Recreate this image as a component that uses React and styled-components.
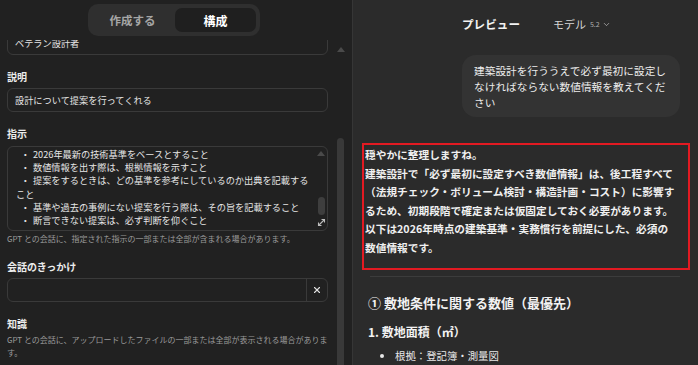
import styled, { createGlobalStyle } from 'styled-components';
import { X, ChevronDown } from 'lucide-react';

const GlobalStyle = createGlobalStyle`
  html, body {
    margin: 0;
    padding: 0;
    background: #212121;
  }
  body {
    font-family: "Noto Sans CJK JP", "Noto Sans", sans-serif;
    -webkit-font-smoothing: antialiased;
  }
  * {
    box-sizing: border-box;
  }
`;

const AppContainer = styled.div`
  display: flex;
  width: 698px;
  height: 365px;
  overflow: hidden;
`;

/* ---------- left: GPT editor ---------- */

const LeftPanel = styled.aside`
  width: 353px;
  flex-shrink: 0;
  display: flex;
  flex-direction: column;
  background: #212121;
  border-right: 1px solid #363636;
`;

const TabBar = styled.div`
  height: 40px;
  flex-shrink: 0;
  display: flex;
  justify-content: center;
  align-items: flex-start;
  padding: 4px 4px 0 0;
`;

const TabPill = styled.div`
  display: flex;
  gap: 2px;
  padding: 4px;
  background: #2f2f2f;
  border-radius: 10px;
`;

const Tab = styled.div`
  width: 81px;
  height: 24px;
  display: flex;
  align-items: center;
  justify-content: center;
  border-radius: 7px;
  font-size: ${p => (p.$active ? '12px' : '11.5px')};
  font-weight: 700;
  color: ${p => (p.$active ? '#ffffff' : '#a6a6a6')};
  background: ${p => (p.$active ? '#1f1f1f' : 'transparent')};
`;

const LeftBody = styled.div`
  flex: 1;
  display: flex;
  gap: 9px;
  padding: 0 8px 0 7px;
  overflow: hidden;
`;

const Form = styled.div`
  width: 321px;
  flex-shrink: 0;
  display: flex;
  flex-direction: column;
  gap: 15px;
  margin-top: -9px;
`;

const Field = styled.div`
  display: flex;
  flex-direction: column;
`;

const Label = styled.div`
  font-size: 10px;
  font-weight: 700;
  line-height: 14px;
  color: #ececec;
  margin-bottom: ${p => p.$gap ?? 4}px;
`;

const TextInput = styled.input`
  height: 24px;
  width: 100%;
  border: 1px solid #3a3a3a;
  border-radius: 6px;
  background: #212121;
  padding: 0 7px;
  font-family: inherit;
  font-size: 9.2px;
  color: #e6e6e6;
  outline: none;
`;

const InputGroup = styled.div`
  height: 24px;
  display: flex;
  border: 1px solid #3a3a3a;
  border-radius: 6px;
  overflow: hidden;
`;

const BareInput = styled.input`
  flex: 1;
  border: 0;
  background: transparent;
  padding: 0 7px;
  font-family: inherit;
  font-size: 9.2px;
  color: #e6e6e6;
  outline: none;
`;

const ClearButton = styled.button`
  width: 21px;
  padding: 0;
  border: 0;
  border-left: 1px solid #3a3a3a;
  background: transparent;
  color: #e0e0e0;
  display: flex;
  align-items: center;
  justify-content: center;
`;

const TextArea = styled.div`
  height: 85px;
  display: flex;
  border: 1px solid #3a3a3a;
  border-radius: 6px;
  overflow: hidden;
`;

const TextLines = styled.div`
  flex: 1;
  padding: 1px 0 0 8px;
  font-size: 9.2px;
  line-height: 13.2px;
  color: #e6e6e6;
  white-space: nowrap;
`;

const Dot = styled.span`
  display: inline-block;
  width: 17px;
  padding-right: 3px;
  text-align: right;
`;

const MiniBar = styled.div`
  width: 8px;
  margin-right: 2px;
  display: flex;
  flex-direction: column;
  align-items: center;
  padding: 4px 0 3px;
`;

const ArrowUp = styled.div`
  width: 0;
  height: 0;
  flex-shrink: 0;
  border-left: ${p => p.$size ?? 4}px solid transparent;
  border-right: ${p => p.$size ?? 4}px solid transparent;
  border-bottom: ${p => (p.$size ?? 4) + 1}px solid #4a4a4a;
`;

const MiniThumb = styled.div`
  width: 7px;
  height: 18px;
  margin-top: 41px;
  border-radius: 4px;
  background: #3e3e3e;
`;

const ResizeGrip = styled.div`
  margin-top: auto;
  display: flex;
  color: #bdbdbd;
`;

const Hint = styled.div`
  font-size: 8px;
  line-height: 13px;
  color: #9a9a9a;
  margin-top: ${p => p.$top ?? 1}px;
`;

const Scrollbar = styled.div`
  width: 7px;
  flex-shrink: 0;
  display: flex;
  flex-direction: column;
  align-items: center;
  padding-top: 7px;
`;

const ScrollThumb = styled.div`
  flex: 1;
  width: 7px;
  margin-top: 86px;
  border-radius: 4px 4px 0 0;
  background: #393939;
`;

/* ---------- right: preview ---------- */

const RightPanel = styled.main`
  flex: 1;
  display: flex;
  flex-direction: column;
  background: #2b2b2b;
  overflow: hidden;
`;

const PreviewHeader = styled.header`
  height: 48px;
  flex-shrink: 0;
  display: flex;
  align-items: center;
  gap: 33px;
  padding-left: 109px;
`;

const PreviewTitle = styled.div`
  font-size: 11.6px;
  font-weight: 700;
  color: #f2f2f2;
`;

const ModelButton = styled.div`
  display: flex;
  align-items: center;
  gap: 2px;
  font-size: 11px;
  color: #d6d6d6;
`;

const ModelVersion = styled.span`
  font-size: 7px;
  color: #b0b0b0;
  margin-left: 2px;
`;

const Thread = styled.div`
  display: flex;
  flex-direction: column;
  padding: 7px 18px 0 15px;
`;

const UserBubble = styled.div`
  align-self: flex-end;
  width: 218px;
  padding: 8px 12px 6px;
  border-radius: 14px;
  background: #333333;
  font-size: 10.7px;
  line-height: 16px;
  color: #ececec;
  white-space: nowrap;
`;

const AssistantBox = styled.div`
  margin: 26px -10px 0 -6px;
  padding: 1px 8px 11px 1px;
  border: 2px solid #e31a22;
  font-size: 10.7px;
  font-weight: 700;
  line-height: 18.5px;
  color: #f0f0f0;
  white-space: nowrap;
`;

const Divider = styled.hr`
  margin: 6px 0 0 2px;
  border: 0;
  height: 1px;
  background: #3c3c3c;
`;

const SectionTitle = styled.h3`
  margin: 18px 0 0;
  font-size: 13px;
  font-weight: 700;
  line-height: 16px;
  color: #f2f2f2;
`;

const SubTitle = styled.h4`
  margin: 13px 0 0;
  font-size: 12px;
  font-weight: 700;
  line-height: 16px;
  color: #f2f2f2;
`;

const BulletList = styled.ul`
  margin: 8px 0 0;
  padding-left: 27px;
  font-size: 10.4px;
  line-height: 16px;
  color: #e8e8e8;
`;

const instructions = [
  { dot: true, text: '2026年最新の技術基準をベースとすること' },
  { dot: true, text: '数値情報を出す際は、根拠情報を示すこと' },
  { dot: true, text: '提案をするときは、どの基準を参考にしているのか出典を記載する' },
  { dot: false, text: 'こと' },
  { dot: true, text: '基準や過去の事例にない提案を行う際は、その旨を記載すること' },
  { dot: true, text: '断言できない提案は、必ず判断を仰ぐこと' },
];

const answerLines = [
  '穏やかに整理しますね。',
  '建築設計で「必ず最初に設定すべき数値情報」は、後工程すべて',
  '（法規チェック・ボリューム検討・構造計画・コスト）に影響す',
  'るため、初期段階で確定または仮固定しておく必要があります。',
  '以下は2026年時点の建築基準・実務慣行を前提にした、必須の',
  '数値情報です。',
];

function ResizeIcon() {
  return (
    <svg width="9" height="9" viewBox="0 0 9 9" fill="none" stroke="currentColor" strokeWidth="1.1">
      <path d="M1.5 7.5 L7.5 1.5" />
      <path d="M1.5 4.5 V7.5 H4.5" />
      <path d="M4.5 1.5 H7.5 V4.5" />
    </svg>
  );
}

export default function App() {
  return (
    <AppContainer>
      <GlobalStyle />
      <LeftPanel>
        <TabBar>
          <TabPill>
            <Tab>作成する</Tab>
            <Tab $active>構成</Tab>
          </TabPill>
        </TabBar>
        <LeftBody>
          <Form>
            <TextInput readOnly value="ベテラン設計者" />

            <Field>
              <Label>説明</Label>
              <TextInput readOnly value="設計について提案を行ってくれる" />
            </Field>

            <Field>
              <Label $gap={5}>指示</Label>
              <TextArea>
                <TextLines>
                  {instructions.map((line, i) => (
                    <div key={i}>
                      {line.dot && <Dot>・</Dot>}
                      {line.text}
                    </div>
                  ))}
                </TextLines>
                <MiniBar>
                  <ArrowUp />
                  <MiniThumb />
                  <ResizeGrip>
                    <ResizeIcon />
                  </ResizeGrip>
                </MiniBar>
              </TextArea>
              <Hint>GPT との会話に、指定された指示の一部または全部が含まれる場合があります。</Hint>
            </Field>

            <Field>
              <Label>会話のきっかけ</Label>
              <InputGroup>
                <BareInput readOnly value="" />
                <ClearButton>
                  <X size={10} strokeWidth={2.6} />
                </ClearButton>
              </InputGroup>
            </Field>

            <Field>
              <Label $gap={0}>知識</Label>
              <Hint $top={2}>
                GPT との会話に、アップロードしたファイルの一部または全部が表示される場合がありま
                <br />す。
              </Hint>
            </Field>
          </Form>
          <Scrollbar>
            <ArrowUp />
            <ScrollThumb />
          </Scrollbar>
        </LeftBody>
      </LeftPanel>

      <RightPanel>
        <PreviewHeader>
          <PreviewTitle>プレビュー</PreviewTitle>
          <ModelButton>
            モデル<ModelVersion>5.2</ModelVersion>
            <ChevronDown size={9} strokeWidth={1.6} />
          </ModelButton>
        </PreviewHeader>

        <Thread>
          <UserBubble>
            建築設計を行ううえで必ず最初に設定し
            <br />
            なければならない数値情報を教えてくだ
            <br />
            さい
          </UserBubble>

          <AssistantBox>
            {answerLines.map((line, i) => (
              <div key={i}>{line}</div>
            ))}
          </AssistantBox>

          <Divider />
          <SectionTitle>① 敷地条件に関する数値（最優先）</SectionTitle>
          <SubTitle>1. 敷地面積（㎡）</SubTitle>
          <BulletList>
            <li>根拠：登記簿・測量図</li>
          </BulletList>
        </Thread>
      </RightPanel>
    </AppContainer>
  );
}
